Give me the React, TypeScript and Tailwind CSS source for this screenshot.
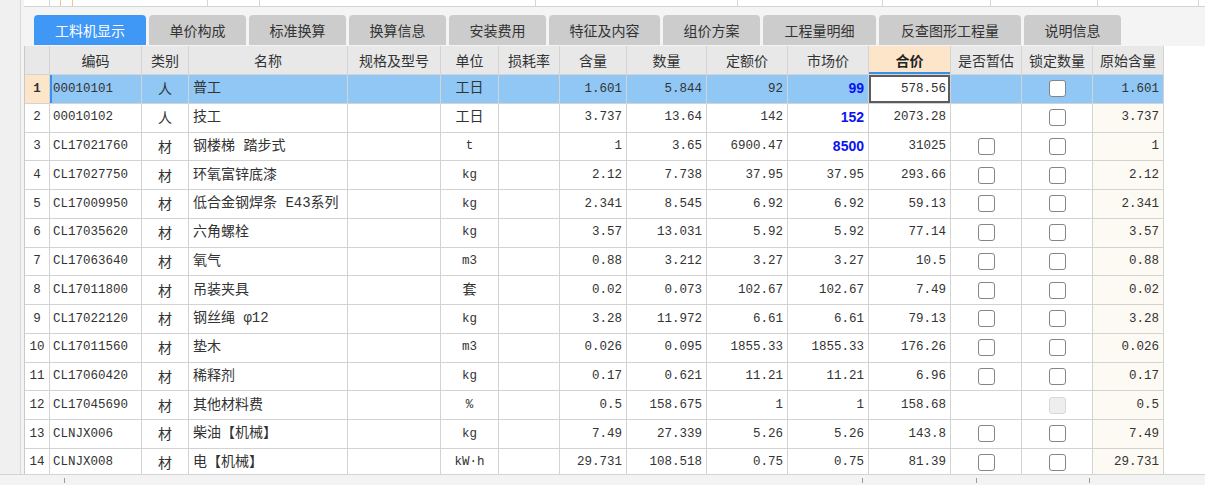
import React from 'react';

type Row = {
  no: number;
  code: string;
  kind: string;
  name: string;
  unit: string;
  qty: string;
  amount: string;
  quota: string;
  market: string;
  marketBlue?: boolean;
  total: string;
  est: 'none' | 'box';
  lock: 'box' | 'disabled';
  orig: string;
};

const rows: Row[] = [
  { no: 1, code: '00010101', kind: '人', name: '普工', unit: '工日', qty: '1.601', amount: '5.844', quota: '92', market: '99', marketBlue: true, total: '578.56', est: 'none', lock: 'box', orig: '1.601' },
  { no: 2, code: '00010102', kind: '人', name: '技工', unit: '工日', qty: '3.737', amount: '13.64', quota: '142', market: '152', marketBlue: true, total: '2073.28', est: 'none', lock: 'box', orig: '3.737' },
  { no: 3, code: 'CL17021760', kind: '材', name: '钢楼梯 踏步式', unit: 't', qty: '1', amount: '3.65', quota: '6900.47', market: '8500', marketBlue: true, total: '31025', est: 'box', lock: 'box', orig: '1' },
  { no: 4, code: 'CL17027750', kind: '材', name: '环氧富锌底漆', unit: 'kg', qty: '2.12', amount: '7.738', quota: '37.95', market: '37.95', total: '293.66', est: 'box', lock: 'box', orig: '2.12' },
  { no: 5, code: 'CL17009950', kind: '材', name: '低合金钢焊条 E43系列', unit: 'kg', qty: '2.341', amount: '8.545', quota: '6.92', market: '6.92', total: '59.13', est: 'box', lock: 'box', orig: '2.341' },
  { no: 6, code: 'CL17035620', kind: '材', name: '六角螺栓', unit: 'kg', qty: '3.57', amount: '13.031', quota: '5.92', market: '5.92', total: '77.14', est: 'box', lock: 'box', orig: '3.57' },
  { no: 7, code: 'CL17063640', kind: '材', name: '氧气', unit: 'm3', qty: '0.88', amount: '3.212', quota: '3.27', market: '3.27', total: '10.5', est: 'box', lock: 'box', orig: '0.88' },
  { no: 8, code: 'CL17011800', kind: '材', name: '吊装夹具', unit: '套', qty: '0.02', amount: '0.073', quota: '102.67', market: '102.67', total: '7.49', est: 'box', lock: 'box', orig: '0.02' },
  { no: 9, code: 'CL17022120', kind: '材', name: '钢丝绳 φ12', unit: 'kg', qty: '3.28', amount: '11.972', quota: '6.61', market: '6.61', total: '79.13', est: 'box', lock: 'box', orig: '3.28' },
  { no: 10, code: 'CL17011560', kind: '材', name: '垫木', unit: 'm3', qty: '0.026', amount: '0.095', quota: '1855.33', market: '1855.33', total: '176.26', est: 'box', lock: 'box', orig: '0.026' },
  { no: 11, code: 'CL17060420', kind: '材', name: '稀释剂', unit: 'kg', qty: '0.17', amount: '0.621', quota: '11.21', market: '11.21', total: '6.96', est: 'box', lock: 'box', orig: '0.17' },
  { no: 12, code: 'CL17045690', kind: '材', name: '其他材料费', unit: '%', qty: '0.5', amount: '158.675', quota: '1', market: '1', total: '158.68', est: 'none', lock: 'disabled', orig: '0.5' },
  { no: 13, code: 'CLNJX006', kind: '材', name: '柴油【机械】', unit: 'kg', qty: '7.49', amount: '27.339', quota: '5.26', market: '5.26', total: '143.8', est: 'box', lock: 'box', orig: '7.49' },
  { no: 14, code: 'CLNJX008', kind: '材', name: '电【机械】', unit: 'kW·h', qty: '29.731', amount: '108.518', quota: '0.75', market: '0.75', total: '81.39', est: 'box', lock: 'box', orig: '29.731' },
];

const tabs = [
  { label: '工料机显示', w: 'w-[112px]', active: true },
  { label: '单价构成', w: 'w-[97px]' },
  { label: '标准换算', w: 'w-[97px]' },
  { label: '换算信息', w: 'w-[97px]' },
  { label: '安装费用', w: 'w-[97px]' },
  { label: '特征及内容', w: 'w-[111px]' },
  { label: '组价方案', w: 'w-[97px]' },
  { label: '工程量明细', w: 'w-[113px]' },
  { label: '反查图形工程量', w: 'w-[142px]' },
  { label: '说明信息', w: 'w-[97px]' },
];

const headers = [
  { label: '', w: 'w-[25px]' },
  { label: '编码', w: 'w-[92px]' },
  { label: '类别', w: 'w-[47px]' },
  { label: '名称', w: 'w-[159px]' },
  { label: '规格及型号', w: 'w-[93px]' },
  { label: '单位', w: 'w-[58px]' },
  { label: '损耗率', w: 'w-[61px]' },
  { label: '含量', w: 'w-[67px]' },
  { label: '数量', w: 'w-[80px]' },
  { label: '定额价', w: 'w-[81px]' },
  { label: '市场价', w: 'w-[81px]' },
  { label: '合价', w: 'w-[82px]' },
  { label: '是否暂估', w: 'w-[71px]' },
  { label: '锁定数量', w: 'w-[71px]' },
  { label: '原始含量', w: 'w-[71px]' },
];

// widths of the partly visible table above the tabs
const topCells = [
  { w: 'w-[26px]', c: 'border-[#d6d6d6]' },
  { w: 'w-[11px]', c: 'border-[#f5c48a]' },
  { w: 'w-[12px]', c: 'border-[#f5c48a]' },
  { w: 'w-[135px]', c: 'border-[#d6d6d6]' },
  { w: 'w-[52px]', c: 'border-[#d6d6d6]' },
  { w: 'w-[276px]', c: 'border-[#d6d6d6]' },
  { w: 'w-[202px]', c: 'border-[#d6d6d6]' },
  { w: 'w-[145px]', c: 'border-[#d6d6d6]' },
  { w: 'w-[108px]', c: 'border-[#d6d6d6]' },
  { w: 'w-[107px]', c: 'border-[#d6d6d6]' },
  { w: 'w-[101px]', c: 'border-[#d6d6d6]' },
];

const mono = 'font-["Liberation_Mono","Noto_Sans_CJK_SC",monospace] text-[12.5px]';
const cell = 'shrink-0 h-full border-r border-b border-[#d3d3d3] flex items-center overflow-hidden whitespace-nowrap';

const Check: React.FC<{ disabled?: boolean }> = ({ disabled }) => (
  <span
    className={
      disabled
        ? 'block w-[17px] h-[17px] rounded-[3px] border border-[#d8d8d8] bg-[#eeeeee]'
        : 'block w-[17px] h-[17px] rounded-[3px] border border-[#858585] bg-white'
    }
  />
);

const App: React.FC = () => {
  return (
    <div className='w-[1205px] h-[485px] bg-[#f0f0f0] flex flex-col overflow-hidden font-["Noto_Sans_CJK_SC","Noto_Sans",sans-serif] text-[#333]'>
      <div className="flex h-[474px]">
        {/* left sidebar */}
        <div className="w-[21px] shrink-0 border-r border-[#d9d9d9] bg-[#f0f0f0]" />

        <div className="flex-1 flex flex-col bg-[#f4f4f4] min-w-0">
          {/* bottom of the table above */}
          <div className="ml-[3px] h-[7px] bg-white border-b border-[#d4d4d4] flex">
            {topCells.map((c, i) => (
              <div key={i} className={`${c.w} shrink-0 h-full border-r ${c.c}`} />
            ))}
          </div>

          {/* tabs */}
          <div className="h-[39px] flex items-end gap-[3px] pl-[13px] pb-[1px]">
            {tabs.map((t) => (
              <div
                key={t.label}
                className={
                  t.active
                    ? `${t.w} h-[30px] shrink-0 rounded-t-[4px] bg-[#3f97f6] text-white text-[14px] flex items-center justify-center`
                    : `${t.w} h-[30px] shrink-0 rounded-t-[4px] bg-[#cccccc] text-[#333] text-[14px] flex items-center justify-center`
                }
              >
                {t.label}
              </div>
            ))}
          </div>

          {/* grid */}
          <div className="flex-1 ml-[3px] bg-white border-l border-[#c9c9c9] overflow-hidden">
            <div className="flex h-[29px]">
              {headers.map((h) => (
                <div
                  key={h.w + h.label}
                  className={
                    h.label === '合价'
                      ? `${h.w} ${cell} justify-center bg-[#fde5ca] font-bold text-[14px] text-[#222] shadow-[inset_0_-2px_0_#3a8fea]`
                      : `${h.w} ${cell} justify-center bg-[#e8e8e8] text-[14px] text-[#333]`
                  }
                >
                  {h.label}
                </div>
              ))}
            </div>

            {rows.map((r) => {
              const sel = r.no === 1;
              const bg = sel ? 'bg-[#91c7f5]' : 'bg-white';
              return (
                <div key={r.no} className="flex h-[28.75px]">
                  <div className={`w-[25px] ${cell} justify-center ${mono} ${sel ? 'bg-[#fde5ca] font-bold' : 'bg-white'}`}>
                    {r.no}
                  </div>
                  <div className={`w-[92px] ${cell} pl-[3px] ${mono} ${bg} ${sel ? 'shadow-[inset_2px_0_0_#3a8fea]' : ''}`}>
                    {r.code}
                  </div>
                  <div className={`w-[47px] ${cell} justify-center text-[14px] ${bg}`}>{r.kind}</div>
                  <div className={`w-[159px] ${cell} pl-[4px] text-[14px] ${bg} ${mono.replace('text-[12.5px]', '')}`}>
                    <span className="text-[14px]">{r.name}</span>
                  </div>
                  <div className={`w-[93px] ${cell} ${bg}`} />
                  <div className={`w-[58px] ${cell} justify-center ${mono} ${bg}`}>
                    <span className={/[\u4e00-\u9fa5]/.test(r.unit) ? 'text-[14px]' : ''}>{r.unit}</span>
                  </div>
                  <div className={`w-[61px] ${cell} ${bg}`} />
                  <div className={`w-[67px] ${cell} justify-end pr-[4px] ${mono} ${bg}`}>{r.qty}</div>
                  <div className={`w-[80px] ${cell} justify-end pr-[4px] ${mono} ${bg}`}>{r.amount}</div>
                  <div className={`w-[81px] ${cell} justify-end pr-[4px] ${mono} ${bg}`}>{r.quota}</div>
                  <div
                    className={
                      r.marketBlue
                        ? `w-[81px] ${cell} justify-end pr-[4px] font-["Liberation_Sans",sans-serif] font-bold text-[14px] text-[#0a14f0] ${bg}`
                        : `w-[81px] ${cell} justify-end pr-[4px] ${mono} ${bg}`
                    }
                  >
                    {r.market}
                  </div>
                  <div
                    className={
                      sel
                        ? `w-[82px] ${cell} justify-end pr-[4px] ${mono} bg-white shadow-[inset_0_0_0_2px_#5c5c5c]`
                        : `w-[82px] ${cell} justify-end pr-[4px] ${mono} bg-white`
                    }
                  >
                    {r.total}
                  </div>
                  <div className={`w-[71px] ${cell} justify-center ${bg}`}>
                    {r.est === 'box' && <Check />}
                  </div>
                  <div className={`w-[71px] ${cell} justify-center ${bg}`}>
                    <Check disabled={r.lock === 'disabled'} />
                  </div>
                  <div className={`w-[71px] ${cell} justify-end pr-[4px] ${mono} ${sel ? bg : 'bg-[#fdf9f3]'}`}>
                    {r.orig}
                  </div>
                </div>
              );
            })}
          </div>
        </div>
      </div>

      {/* bottom strip */}
      <div className="h-[11px] border-t border-[#d4d4d4] bg-[#f3f3f3] flex items-start pt-[3px]">
        <div className="w-[65px] h-[5px] shrink-0 border-r border-[#9a9a9a]" />
        <div className="w-[798px] h-[5px] shrink-0 border-r border-[#9a9a9a]" />
        <div className="w-[114px] h-[5px] shrink-0 border-r border-[#9a9a9a]" />
        <div className="w-[113px] h-[5px] shrink-0 border-r border-[#9a9a9a]" />
      </div>
    </div>
  );
};

export default App;
